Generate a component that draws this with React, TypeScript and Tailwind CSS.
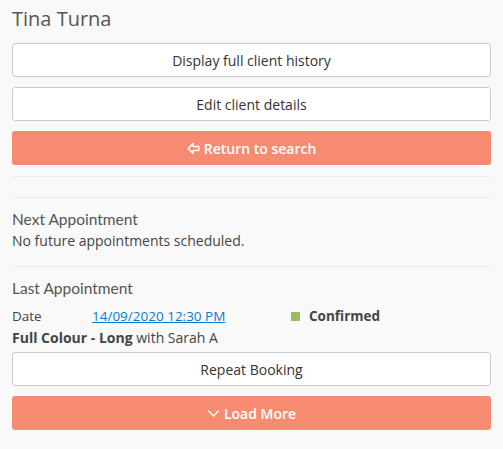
import React from "react"

const font = { fontFamily: "'Open Sans', Lato, sans-serif" }
const headFont = { fontFamily: "Lato, 'Open Sans', sans-serif" }

function ArrowLeftOutline() {
  return (
    <svg width="13" height="13" viewBox="0 0 16 16" fill="none" stroke="currentColor" strokeWidth="1.8" strokeLinejoin="round">
      <path d="M1.5 8 L7.5 2 V5.5 H14.5 V10.5 H7.5 V14 Z" />
    </svg>
  )
}

function ChevronDown() {
  return (
    <svg width="13" height="13" viewBox="0 0 16 16" fill="none" stroke="currentColor" strokeWidth="1.8" strokeLinecap="round" strokeLinejoin="round">
      <path d="M2 5 L8 11 L14 5" />
    </svg>
  )
}

function WhiteButton({ children }: { children: React.ReactNode }) {
  return (
    <button className="w-full h-[34px] bg-white border border-[#cccccc] rounded-[3px] text-[14px] text-[#333] flex items-center justify-center">
      {children}
    </button>
  )
}

function OrangeButton({ children }: { children: React.ReactNode }) {
  return (
    <button className="w-full h-[34px] bg-[#f78b71] rounded-[3px] text-[14px] font-semibold text-white flex items-center justify-center gap-1">
      {children}
    </button>
  )
}

export default function App() {
  return (
    <div className="w-[503px] h-[449px] bg-[#f9f9f9] px-3 pt-[7px]" style={font}>
      <h1 className="text-[20px] text-[#555] leading-[24px]" style={font}>Tina Turna</h1>

      <div className="mt-[12px] flex flex-col gap-[10px]">
        <WhiteButton>Display full client history</WhiteButton>
        <WhiteButton>Edit client details</WhiteButton>
        <OrangeButton>
          <ArrowLeftOutline />
          Return to search
        </OrangeButton>
      </div>

      <div className="mt-[11px] border-t border-[#efe7e9]" />
      <div className="mt-[20px] border-t border-[#efe7e9]" />

      <div className="pt-[11px]">
        <h2 className="text-[15.5px] text-[#555] leading-[20px]" style={headFont}>Next Appointment</h2>
        <p className="text-[14px] text-[#444] leading-[20px] mt-[2px]">No future appointments scheduled.</p>
      </div>

      <div className="mt-[15px] border-t border-[#efe7e9]" />

      <div className="pt-[11px]">
        <h2 className="text-[15.5px] text-[#555] leading-[20px]" style={headFont}>Last Appointment</h2>
        <div className="mt-[8px] flex items-center text-[13.5px] leading-[20px]">
          <span className="w-[80px] text-[#444]">Date</span>
          <a href="#" className="text-[#0a7bd5] underline w-[199px]">14/09/2020 12:30 PM</a>
          <span className="w-[9px] h-[9px] bg-[#9bbb5c] mr-[9px]" />
          <span className="font-bold text-[#444]">Confirmed</span>
        </div>
        <p className="text-[14px] text-[#444] leading-[20px] mt-[2px]">
          <span className="font-bold">Full Colour - Long</span> with Sarah A
        </p>
        <div className="mt-[4px] flex flex-col gap-[10px]">
          <WhiteButton>Repeat Booking</WhiteButton>
          <OrangeButton>
            <ChevronDown />
            Load More
          </OrangeButton>
        </div>
      </div>
    </div>
  )
}
